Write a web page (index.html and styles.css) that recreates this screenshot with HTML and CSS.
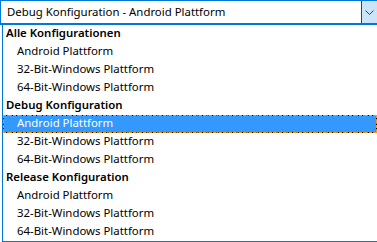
FILE: index.html
```html
<!DOCTYPE html>
<html lang="de">
<head>
  <meta charset="UTF-8">
  <title>Konfiguration</title>
  <link rel="stylesheet" href="styles.css">
</head>
<body>
  <div class="combo">
    <span class="combo-text">Debug Konfiguration - Android Plattform</span>
    <span class="combo-btn">
      <svg width="9" height="5" viewBox="0 0 9 5"><path d="M0.5 0.5 L4.5 4.5 L8.5 0.5" fill="none" stroke="#404040" stroke-width="1"/></svg>
    </span>
  </div>
  <div class="list">
    <div class="row head">Alle Konfigurationen</div>
    <div class="row">Android Plattform</div>
    <div class="row">32-Bit-Windows Plattform</div>
    <div class="row">64-Bit-Windows Plattform</div>
    <div class="row head">Debug Konfiguration</div>
    <div class="row selected">Android Plattform</div>
    <div class="row">32-Bit-Windows Plattform</div>
    <div class="row">64-Bit-Windows Plattform</div>
    <div class="row head">Release Konfiguration</div>
    <div class="row">Android Plattform</div>
    <div class="row">32-Bit-Windows Plattform</div>
    <div class="row">64-Bit-Windows Plattform</div>
  </div>
</body>
</html>
```

FILE: styles.css
```css
body {
  margin: 0;
  background: #fff;
  font-family: "Noto Sans", "Open Sans", sans-serif;
  font-size: 11.4px;
  color: #000;
  width: 377px;
  height: 242px;
  overflow: hidden;
}
.combo {
  display: flex;
  height: 22px;
  border: 1px solid #0078d7;
  border-bottom-width: 2px;
  border-right: none;
  width: 376px;
}
.combo-text {
  flex: 1;
  padding-left: 6px;
  line-height: 21px;
}
.combo-btn {
  width: 15px;
  background: #cce4f7;
  border-left: 1px solid #005499;
  display: flex;
  align-items: center;
  justify-content: center;
}
.list {
  margin-left: 2px;
  width: 380px;
  border: 1px solid #0078d7;
  border-top: none;
}
.row {
  height: 18px;
  line-height: 16px;
  padding-left: 14px;
  box-sizing: border-box;
  white-space: nowrap;
}
.row.head {
  font-weight: 600;
  padding-left: 3px;
}
.row.selected {
  background: #3399ff;
  color: #fff;
  width: 374px;
  border: 1px dotted #000;
  outline: 1px dashed #ff9900;
  outline-offset: -1px;
  line-height: 14px;
  padding-left: 13px;
}
```
